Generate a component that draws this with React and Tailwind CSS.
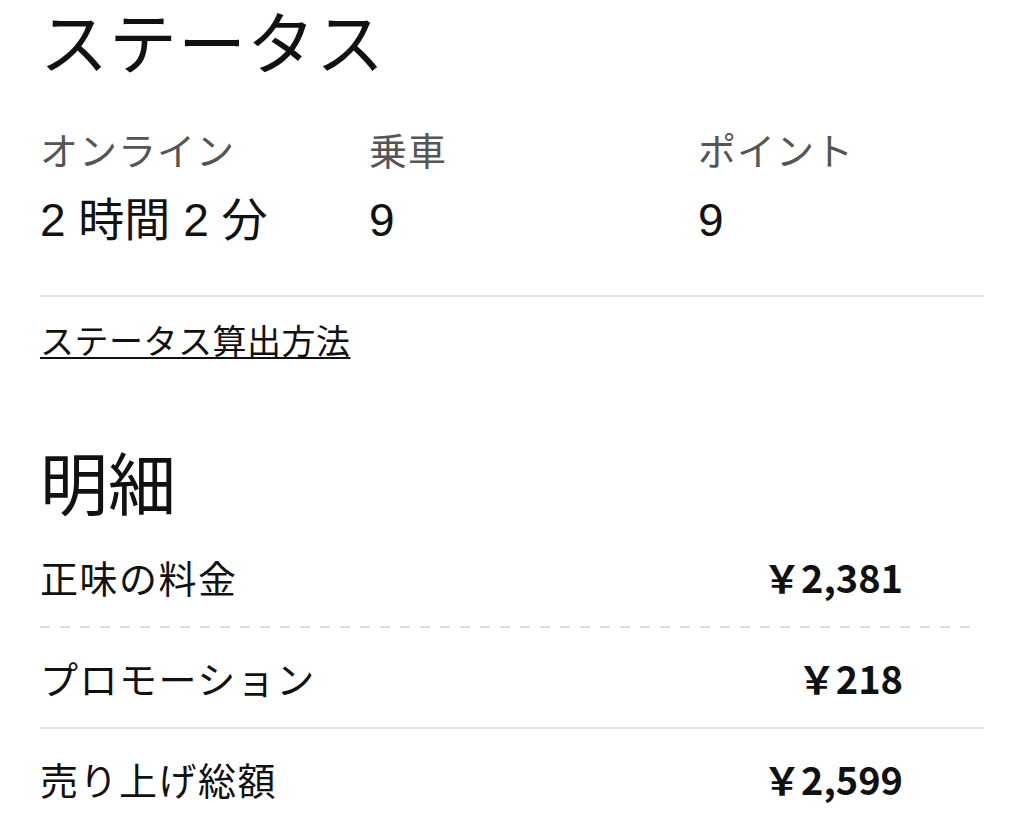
export default function App() {
  const jp = { fontFamily: '"Noto Sans CJK JP", "Noto Sans", sans-serif' };
  const num = { fontFamily: '"Liberation Sans", "Noto Sans CJK JP", sans-serif' };
  const stats = [
    { label: "オンライン", value: "2 時間 2 分" },
    { label: "乗車", value: "9" },
    { label: "ポイント", value: "9" },
  ];
  const rows = [
    { label: "正味の料金", amount: "2,381", sep: "dashed" },
    { label: "プロモーション", amount: "218", sep: "solid" },
    { label: "売り上げ総額", amount: "2,599", sep: null },
  ];
  return (
    <div className="w-[1024px] h-[832px] overflow-hidden bg-white text-[#111] px-[40px]" style={jp}>
      <h1 className="h-[84px] leading-[80px] text-[68px] font-normal tracking-[1px]">ステータス</h1>

      <div className="grid grid-cols-[329px_329px_1fr] mt-[45px]">
        {stats.map((s) => (
          <div key={s.label} className="flex flex-col">
            <div className="h-[40px] leading-[40px] text-[38px] text-[#555] tracking-[1px]">{s.label}</div>
            <div className="h-[48px] leading-[48px] text-[46px] mt-[27px]" style={num}>
              {s.value}
            </div>
          </div>
        ))}
      </div>

      <div className="mt-[51px] h-[2px] bg-[#e3e3e3]" />

      <div className="mt-[23px] h-[40px] leading-[40px] text-[34px] tracking-[0.5px]">
        <a className="underline decoration-[2px] underline-offset-[3px]">ステータス算出方法</a>
      </div>

      <h2 className="mt-[81px] h-[80px] leading-[80px] text-[68px] font-normal">明細</h2>

      <div className="mt-[6px] flex flex-col">
        {rows.map((r) => (
          <div key={r.label} className="flex flex-col">
            <div className="h-[99px] flex items-center justify-between pr-[81px]">
              <span className="text-[38px] leading-[48px] tracking-[1.5px]">{r.label}</span>
              <span className="text-[38px] leading-[48px] font-bold">￥{r.amount}</span>
            </div>
            {r.sep === "dashed" && (
              <div className="h-[2px] mr-[4px] bg-[linear-gradient(to_right,#dcdcdc_50%,transparent_50%)] bg-[length:20px_2px]" />
            )}
            {r.sep === "solid" && <div className="h-[2px] bg-[#e3e3e3]" />}
          </div>
        ))}
      </div>
    </div>
  );
}
